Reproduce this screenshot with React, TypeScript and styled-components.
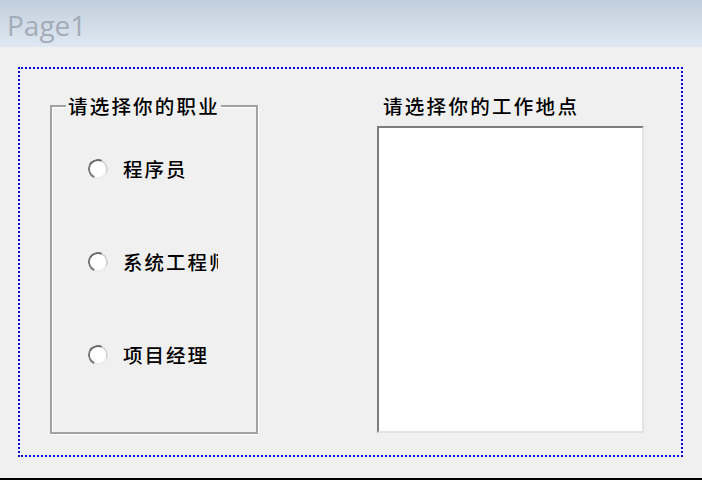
import React from "react";
import styled, { createGlobalStyle } from "styled-components";

const Global = createGlobalStyle`
  html, body { margin: 0; padding: 0; background: #f0f0f0; }
  #root { width: 702px; height: 480px; overflow: hidden; }
`;

const cjk = `"Noto Sans CJK SC", "Noto Sans", sans-serif`;

const Screen = styled.div`
  width: 702px;
  height: 480px;
  display: flex;
  flex-direction: column;
  background: #f0f0f0;
`;

const Header = styled.div`
  height: 47px;
  flex: none;
  background: linear-gradient(#c1cedc, #dfe8f2);
  display: flex;
  align-items: center;
  padding-left: 7px;
  box-sizing: border-box;
`;

const Title = styled.div`
  font-family: "Open Sans", "Noto Sans", sans-serif;
  font-size: 28px;
  color: #a3acb7;
  line-height: 1;
  margin-top: 3px;
`;

const Body = styled.div`
  flex: 1;
  padding: 20px 0 0 18px;
`;

const FocusFrame = styled.div`
  width: 665px;
  height: 390px;
  box-sizing: border-box;
  border: 2px dotted #0a0ad0;
  padding: 25px 0 0 30px;
  display: flex;
  gap: 119px;
`;

const GroupBox = styled.fieldset`
  margin: 0;
  padding: 0;
  width: 208px;
  height: 340px;
  box-sizing: border-box;
  border: 2px solid #a2a2a2;
  box-shadow: 1px 1px 0 #ffffff, inset 1px 1px 0 #ffffff;
  display: flex;
  flex-direction: column;
`;

const Legend = styled.legend`
  font-family: ${cjk};
  font-size: 19.5px;
  font-weight: 500;
  letter-spacing: 2.2px;
  line-height: 24px;
  color: #000;
  padding: 0 1px 0 2px;
  margin-left: 14px;
`;

const Options = styled.div`
  display: flex;
  flex-direction: column;
  gap: 65px;
  padding: 37px 0 0 36px;
`;

const Option = styled.label`
  display: flex;
  align-items: center;
  gap: 15px;
  height: 28px;
`;

const Radio = styled.span`
  width: 20px;
  height: 20px;
  box-sizing: border-box;
  border-radius: 50%;
  border: 2px solid;
  border-color: #6a6a6a #d4d4d4 #ececec #7a7a7a;
  transform: rotate(-20deg);
  background: #fff;
  flex: none;
`;

const OptionText = styled.span<{ $clip?: number }>`
  font-family: ${cjk};
  font-size: 19.5px;
  font-weight: 500;
  letter-spacing: 2px;
  line-height: 28px;
  white-space: nowrap;
  overflow: hidden;
  max-width: ${(p) => (p.$clip ? `${p.$clip}px` : "none")};
  color: #000;
`;

const Column = styled.div`
  display: flex;
  flex-direction: column;
`;

const ColumnLabel = styled.div`
  font-family: ${cjk};
  font-size: 19.5px;
  font-weight: 500;
  letter-spacing: 2.3px;
  line-height: 24px;
  color: #000;
  padding-left: 6px;
  height: 32px;
`;

const ListBox = styled.div`
  width: 267px;
  height: 307px;
  box-sizing: border-box;
  background: #fff;
  border: 2px solid;
  border-color: #7d7d7d #e3e3e3 #e3e3e3 #7d7d7d;
`;

const Bottom = styled.div`
  height: 2px;
  flex: none;
  background: #000;
`;

const jobs: { label: string; clip?: number }[] = [
  { label: "程序员" },
  { label: "系统工程师", clip: 95 },
  { label: "项目经理" },
];

export default function App() {
  return (
    <Screen>
      <Global />
      <Header>
        <Title>Page1</Title>
      </Header>
      <Body>
        <FocusFrame>
          <GroupBox>
            <Legend>请选择你的职业</Legend>
            <Options>
              {jobs.map((j) => (
                <Option key={j.label}>
                  <Radio />
                  <OptionText $clip={j.clip}>{j.label}</OptionText>
                </Option>
              ))}
            </Options>
          </GroupBox>
          <Column>
            <ColumnLabel>请选择你的工作地点</ColumnLabel>
            <ListBox />
          </Column>
        </FocusFrame>
      </Body>
      <Bottom />
    </Screen>
  );
}
